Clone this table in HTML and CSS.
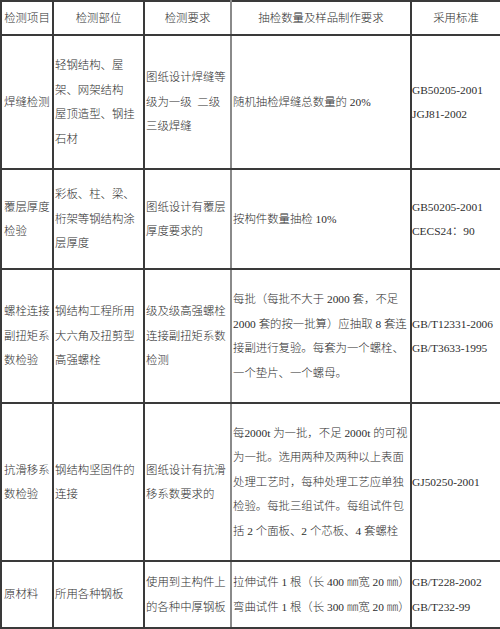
FILE: index.html
```html
<!DOCTYPE html>
<html lang="zh-CN">
<head>
<meta charset="utf-8">
<title>检测项目</title>
<link rel="stylesheet" href="styles.css">
</head>
<body>
<table class="spec">
  <colgroup>
    <col class="c1"><col class="c2"><col class="c3"><col class="c4"><col class="c5">
  </colgroup>
  <thead>
    <tr class="r-head">
      <th>检测项目</th>
      <th>检测部位</th>
      <th class="split">检测要求</th>
      <th>抽检数量及样品制作要求</th>
      <th>采用标准</th>
    </tr>
  </thead>
  <tbody>
    <tr class="r1">
      <td class="item">焊缝检测</td>
      <td>轻钢结构、屋<br>架、网架结构<br>屋顶造型、钢挂<br>石材</td>
      <td class="split">图纸设计焊缝等<br>级为一级&nbsp; 二级<br>三级焊缝</td>
      <td>随机抽检焊缝总数量的 20%</td>
      <td class="std">GB50205-2001<br>JGJ81-2002</td>
    </tr>
    <tr class="r2">
      <td class="item">覆层厚度<br>检验</td>
      <td>彩板、柱、梁、<br>桁架等钢结构涂<br>层厚度</td>
      <td class="split">图纸设计有覆层<br>厚度要求的</td>
      <td>按构件数量抽检 10%</td>
      <td class="std">GB50205-2001<br>CECS24：90</td>
    </tr>
    <tr class="r3">
      <td class="item">螺栓连接<br>副扭矩系<br>数检验</td>
      <td>钢结构工程所用<br>大六角及扭剪型<br>高强螺栓</td>
      <td class="split">级及级高强螺栓<br>连接副扭矩系数<br>检测</td>
      <td>每批（每批不大于 2000 套，不足<br>2000 套的按一批算）应抽取 8 套连<br>接副进行复验。每套为一个螺栓、<br>一个垫片、一个螺母。</td>
      <td class="std">GB/T12331-2006<br>GB/T3633-1995</td>
    </tr>
    <tr class="r4">
      <td class="item">抗滑移系<br>数检验</td>
      <td>钢结构坚固件的<br>连接</td>
      <td class="split">图纸设计有抗滑<br>移系数要求的</td>
      <td>每2000t 为一批，不足 2000t 的可视<br>为一批。选用两种及两种以上表面<br>处理工艺时，每种处理工艺应单独<br>检验。每批三组试件。每组试件包<br>括 2 个面板、2 个芯板、4 套螺栓</td>
      <td class="std">GJ50250-2001</td>
    </tr>
    <tr class="r5">
      <td class="item">原材料</td>
      <td>所用各种钢板</td>
      <td class="split">使用到主构件上<br>的各种中厚钢板</td>
      <td>拉伸试件 1 根（长 400 ㎜宽 20 ㎜）<br>弯曲试件 1 根（长 300 ㎜宽 20 ㎜）</td>
      <td class="std">GB/T228-2002<br>GB/T232-99</td>
    </tr>
  </tbody>
</table>
</body>
</html>
```

FILE: styles.css
```css
html, body {
  margin: 0;
  padding: 0;
  background: #ffffff;
}

.spec {
  border-collapse: collapse;
  table-layout: fixed;
  width: 500px;
  font-family: "Liberation Serif", "Noto Sans CJK SC", serif;
  font-size: 11.4px;
  font-weight: 300;
  color: #2e2e2e;
  line-height: 24.5px;
}

.c1 { width: 52px; }
.c2 { width: 91px; }
.c3 { width: 87px; }
.c4 { width: 180px; }
.c5 { width: 90px; }

.spec th,
.spec td {
  border: 2px solid #3a3a3a;
  padding: 0 0 0 1px;
  vertical-align: middle;
  white-space: nowrap;
  overflow: visible;
  text-align: left;
}

.spec th {
  font-weight: 300;
  text-align: center;
  padding: 0;
}

.spec .split {
  border-right-color: #8a8a8a;
}

.spec td.item {
  padding-left: 2px;
}

.spec td.std {
  padding-left: 0;
}

.r-head { height: 34px; }
.r1 { height: 134px; }
.r2 { height: 100px; }
.r3 { height: 134px; }
.r4 { height: 158px; }
.r5 { height: 67px; }
```
